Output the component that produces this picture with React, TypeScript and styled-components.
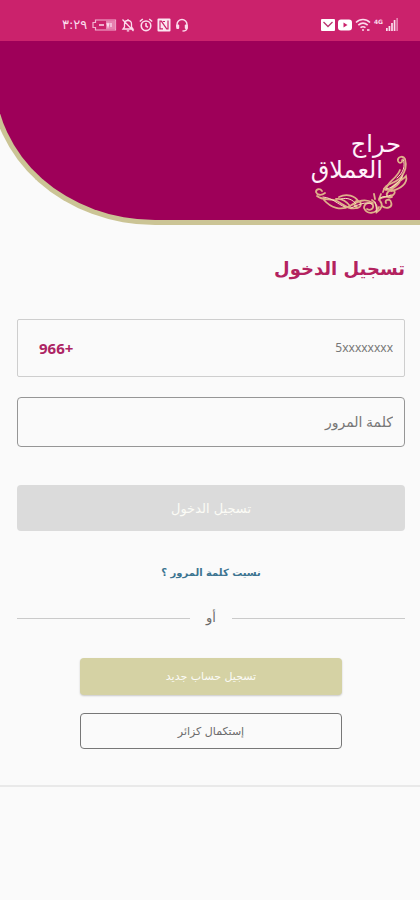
import React from "react";
import styled, { createGlobalStyle } from "styled-components";

const GlobalStyle = createGlobalStyle`
  * { box-sizing: border-box; }
  body {
    margin: 0;
    background: #fafafa;
    font-family: "DejaVu Sans", sans-serif;
    color: #6b6b6b;
  }
  input, button { font-family: inherit; }
`;

const Screen = styled.div`
  min-height: 100vh;
  overflow: hidden;
`;

const StatusBar = styled.div`
  direction: ltr;
  display: flex;
  align-items: center;
  justify-content: space-between;
  height: 41px;
  padding: 8px 22px 0 62px;
  background: #cb226c;
  color: #fbdcec;
`;

const StatusGroup = styled.div<{ $gap: number }>`
  display: flex;
  align-items: center;
  gap: ${(p) => p.$gap}px;
  svg { display: block; }
`;

const Clock = styled.span`
  font-size: 13px;
  line-height: 16px;
  margin-right: 1px;
`;

const Banner = styled.header`
  display: flex;
  justify-content: flex-end;
  height: 184px;
  margin-left: -10px;
  padding: 90px 11px 0 0;
  background: #9e0059;
  border-left: 5px solid #cbc495;
  border-bottom: 5px solid #cbc495;
  border-bottom-left-radius: 165px 147px;
`;

const Brand = styled.div`
  display: grid;
  width: 102px;
  height: 84px;
  > * { grid-area: 1 / 1; }
`;

const BrandName = styled.div`
  direction: rtl;
  color: #fff0fa;
  font-size: 24px;
  line-height: 26px;
  padding-right: 8px;
  white-space: nowrap;
`;

const BrandSecond = styled.span`
  display: block;
  padding-right: 18px;
`;

const Card = styled.main`
  padding: 28px 15px 36px 17px;
  border-bottom: 2px solid #e9e9e9;
`;

const Title = styled.h1`
  margin: 0 0 34px;
  font-size: 18px;
  line-height: 32px;
  font-weight: 700;
  color: #b3225f;
`;

const Form = styled.form`
  display: flex;
  flex-direction: column;
`;

const Field = styled.label<{ $tall?: boolean }>`
  display: flex;
  align-items: center;
  height: ${(p) => (p.$tall ? 58 : 50)}px;
  margin-bottom: ${(p) => (p.$tall ? 20 : 38)}px;
  padding: 0 11px 0 21px;
  border: 1px solid ${(p) => (p.$tall ? "#cecece" : "#969696")};
  border-radius: ${(p) => (p.$tall ? 2 : 4)}px;
`;

const TextInput = styled.input<{ $size: number }>`
  flex: 1;
  min-width: 0;
  padding: 0;
  border: 0;
  outline: 0;
  background: transparent;
  direction: rtl;
  text-align: right;
  font-family: "Noto Sans", "DejaVu Sans", sans-serif;
  font-size: ${(p) => p.$size}px;
  line-height: 20px;
  color: #6b6b6b;
  &::placeholder { color: #777; opacity: 1; }
`;

const Prefix = styled.span`
  font-family: "Noto Sans", "DejaVu Sans", sans-serif;
  font-size: 15px;
  line-height: 20px;
  font-weight: 700;
  color: #ad2464;
`;

const Button = styled.button<{ $kind: "login" | "register" | "guest" }>`
  padding: 0;
  border: ${(p) => (p.$kind === "guest" ? "1px solid #777" : "0")};
  border-radius: 4px;
  height: ${(p) => (p.$kind === "login" ? 46 : p.$kind === "register" ? 37 : 36)}px;
  font-size: ${(p) => (p.$kind === "login" ? 13 : 11)}px;
  color: ${(p) => (p.$kind === "guest" ? "#6b6b6b" : "#fbfbf6")};
  background: ${(p) =>
    p.$kind === "login" ? "#dbdbdb" : p.$kind === "register" ? "#d5d2a4" : "transparent"};
  box-shadow: ${(p) => (p.$kind === "register" ? "0 1px 2px rgba(0, 0, 0, 0.2)" : "none")};
`;

const Forgot = styled.a`
  align-self: center;
  margin-top: 32px;
  font-size: 10px;
  line-height: 20px;
  font-weight: 700;
  color: #3c7490;
  text-decoration: none;
`;

const Divider = styled.div`
  display: flex;
  align-items: center;
  gap: 16px;
  margin: 25px 0 30px;
  font-size: 13px;
  line-height: 20px;
  &::before, &::after {
    content: "";
    flex: 1;
    height: 1px;
    background: #cacaca;
  }
`;

const Alternatives = styled.div`
  display: flex;
  flex-direction: column;
  gap: 18px;
  padding: 0 63px;
`;

const Battery = () => (
  <svg width="25" height="12" viewBox="0 0 25 12">
    <path d="M3.5 1h20v10h-20V8.500H1v-5h2.500z" fill="none" stroke="#f3b2d1" strokeWidth="1.200" />
    <path d="M14 1.500h9.500v9H14z" fill="#e681af" />
    <path d="M7 6h5M15 4l1 3.500 1-3.500M19 8V4" fill="none" stroke="#fbdcec" strokeWidth="1.300" />
  </svg>
);

const BellOff = () => (
  <svg width="14" height="14" viewBox="0 0 14 14" fill="none" stroke="#fbdcec" strokeWidth="1.300">
    <path d="M2 11h10L10.500 9V6c0-2-1.300-3.500-3.500-3.500S3.500 4 3.500 6v3zM7 1v1.500M5.800 12.800h2.400M1.500 1.500l11 11.500" />
  </svg>
);

const Alarm = () => (
  <svg width="14" height="14" viewBox="0 0 14 14" fill="none" stroke="#fbdcec" strokeWidth="1.600">
    <circle cx="7" cy="7.800" r="4.800" />
    <path d="M7 5v3l2 1.300M.8 3.500l3-2.500M13.200 3.500l-3-2.500" />
  </svg>
);

const Nfc = () => (
  <svg width="14" height="14" viewBox="0 0 14 14">
    <rect x=".5" y=".5" width="13" height="13" rx="1" fill="#fbe6f1" />
    <path d="M3 11.500V3.200h1.300l5.400 7.600H11V2.500M5.800 3.500H8M6 10.800H3.500" fill="none" stroke="#cb226c" strokeWidth="1.200" />
  </svg>
);

const Headset = () => (
  <svg width="14" height="14" viewBox="0 0 14 14">
    <path d="M2 9V6.500a5 5 0 0 1 10 0V10c0 2-2 3-4.500 3" fill="none" stroke="#fbdcec" strokeWidth="1.400" />
    <rect x="1.200" y="6.500" width="3" height="4.500" rx="1" fill="#fbdcec" />
    <rect x="9.800" y="6.500" width="3" height="4.500" rx="1" fill="#fbdcec" />
  </svg>
);

const Mail = () => (
  <svg width="14" height="12" viewBox="0 0 14 12">
    <rect width="14" height="12" rx="1" fill="#fff" />
    <path d="M2.500 3L7 7.500 11.500 3" fill="none" stroke="#b93570" strokeWidth="1.300" />
  </svg>
);

const Video = () => (
  <svg width="14" height="12" viewBox="0 0 14 12">
    <rect y=".5" width="14" height="11" rx="3" fill="#fff" />
    <path d="M5.500 3.500v5L9.500 6z" fill="#cb226c" />
  </svg>
);

const Wifi = () => (
  <svg width="16" height="14" viewBox="0 0 16 14" fill="none" stroke="#fbdcec" strokeWidth="1.600">
    <path d="M1 4.500c4-4 10-4 14 0M3.300 7.200c3-2.700 6.400-2.700 9.400 0M5.500 9.700c1.800-1.400 3.200-1.400 5 0" />
    <circle cx="8" cy="12" r="1" fill="#fbdcec" stroke="none" />
    <path d="M12 12h2.500" />
  </svg>
);

const Network = styled.span`
  align-self: flex-start;
  font-size: 6px;
  line-height: 8px;
  font-weight: 700;
`;

const Signal = () => (
  <svg width="12" height="14" viewBox="0 0 14 14" preserveAspectRatio="none" fill="#fbdcec">
    <path d="M0 10h2v3H0zM3 8h2v5H3zM6 5h2v8H6zM9 2h2v11H9z" />
    <path d="M12 0h2v13h-2z" fill="#e681af" />
  </svg>
);

const Ornament = () => (
  <svg width="102" height="84" viewBox="0 0 102 84" fill="none" stroke="#dfb08a" strokeLinecap="round">
    <g strokeWidth="1.800">
      <path d="M18 62c-4 3-8 2-9-1 0-3 4-4 6-1" />
      <path d="M10 65c6 5 13 2 20 5 7 4 12 9 20 7 5-1 5-6 1-7-4 0-5 5-1 6" />
      <path d="M17 69c7 8 17 11 26 6 8-5 15-8 23-3" />
      <path d="M32 66c8-4 16-1 19 4M29 68c6-1 11 3 14 7" />
      <path d="M57 77c0-5 7-7 9-3 1 4-3 6-6 4M57 77c3 7 12 6 15-1" />
      <path d="M65 69c4 2 6 8 5 12 5-3 6-8 3-11M68 68l-1-5M72 68l2-5" />
      <path d="M72 69c4-6 10-1 14-5 5-4-2-7-5-3-3 3 0 7 4 5" />
      <path d="M75 75c5 4 11 1 9-4-1-4-7-2-5 1" />
      <path d="M76 61c1-9 13-8 18-15 5-6 6-11 4-18-2-4-8-2-7 2 1 3 5 2 4-1" />
      <path d="M77 58c6 3 15-3 18-12M79 59c1-9 10-10 14-20M84 60c10-2 17-8 15-15-4 5-9 6-15 12" />
    </g>
    <g stroke="#fae0bb" strokeWidth="1">
      <path d="M16 66c10 1 14 7 22 10M34 68c7-2 12 1 15 5M68 71c1 3 2 7 1 10M73 67c3-2 8-1 11-3" />
      <path d="M79 58c8-1 14-8 17-14M96 28c3 7 0 14-6 19M44 77c7-3 14-7 21-4" />
    </g>
  </svg>
);

export default function App() {
  return (
    <Screen dir="rtl" lang="ar">
      <GlobalStyle />
      <StatusBar>
        <StatusGroup $gap={4}>
          <Clock>٣:٢٩</Clock>
          <Battery />
          <BellOff />
          <Alarm />
          <Nfc />
          <Headset />
        </StatusGroup>
        <StatusGroup $gap={3}>
          <Mail />
          <Video />
          <Wifi />
          <Network>4G</Network>
          <Signal />
        </StatusGroup>
      </StatusBar>
      <Banner dir="ltr">
        <Brand>
          <Ornament />
          <BrandName>
            حراج
            <BrandSecond>العملاق</BrandSecond>
          </BrandName>
        </Brand>
      </Banner>
      <Card>
        <Title>تسجيل الدخول</Title>
        <Form onSubmit={(e) => e.preventDefault()}>
          <Field $tall>
            <TextInput $size={12} type="tel" placeholder="5xxxxxxxx" aria-label="رقم الجوال" />
            <Prefix>+966</Prefix>
          </Field>
          <Field>
            <TextInput $size={14} type="password" placeholder="كلمة المرور" aria-label="كلمة المرور" />
          </Field>
          <Button $kind="login" type="submit">تسجيل الدخول</Button>
          <Forgot href="#forgot">نسيت كلمة المرور ؟</Forgot>
          <Divider>أو</Divider>
          <Alternatives>
            <Button $kind="register" type="button">تسجيل حساب جديد</Button>
            <Button $kind="guest" type="button">إستكمال كزائر</Button>
          </Alternatives>
        </Form>
      </Card>
    </Screen>
  );
}
